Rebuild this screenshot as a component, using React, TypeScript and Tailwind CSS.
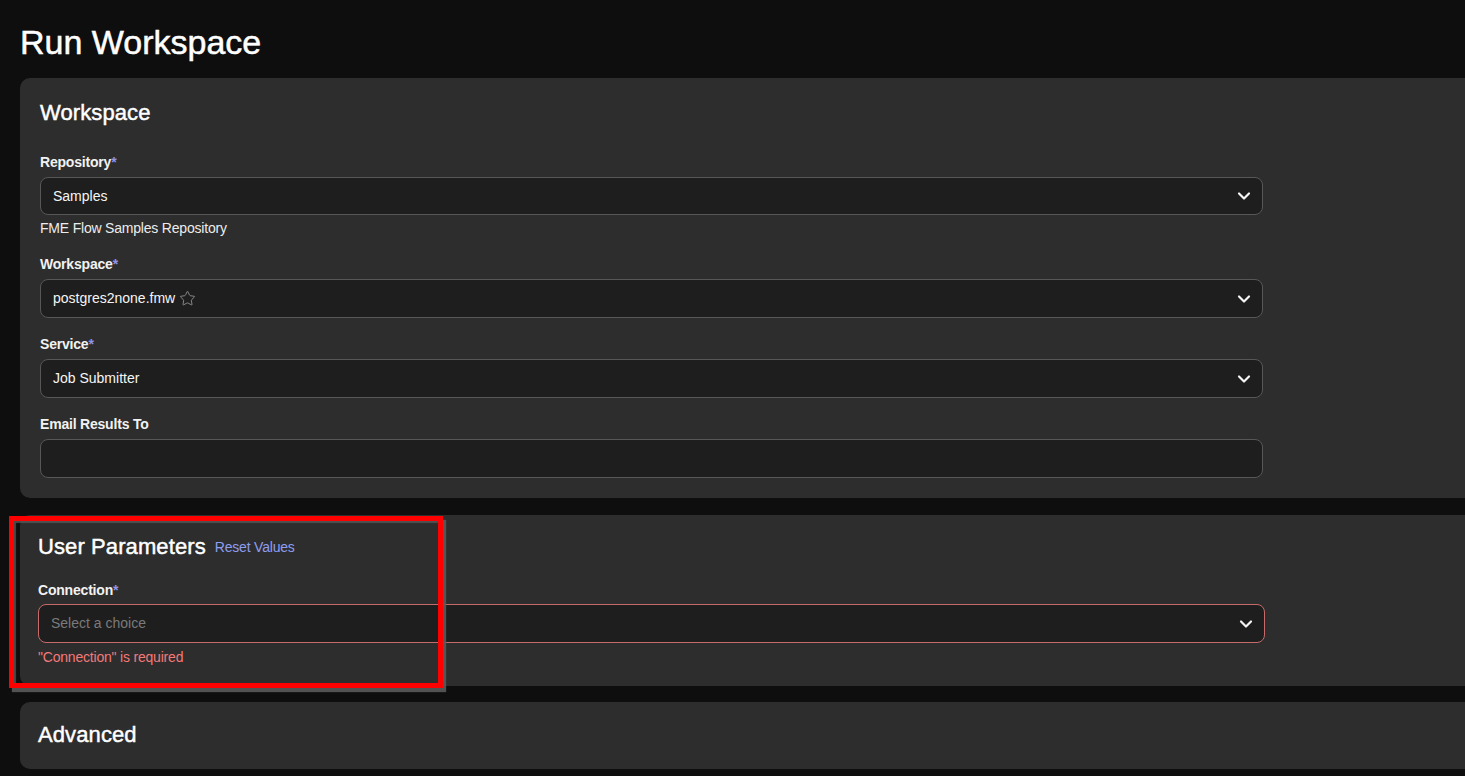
import React from "react";
import { ChevronDown, Star } from "lucide-react";

const font = { fontFamily: '"Liberation Sans", Arial, sans-serif' };

const Label = ({ text, required }: { text: string; required?: boolean }) => (
  <div className="text-[14px] leading-5 font-bold text-[#f2f2f2] tracking-[-0.2px]">
    {text}
    {required && <span className="text-[#8f94ea]">*</span>}
  </div>
);

const SelectBox = ({
  children,
  tall,
}: {
  children?: React.ReactNode;
  tall?: boolean;
}) => (
  <div
    className={`mt-[5px] w-[1223px] rounded-[8px] border border-[#575757] bg-[#1f1e1e] pl-[12px] pr-[8px] flex items-center justify-between text-[14px] ${
      tall ? "h-[39px]" : "h-[38px]"
    }`}
  >
    <div className="flex items-center gap-1 text-[#f5f5f5]">{children}</div>
    <ChevronDown size={20} strokeWidth={2.6} className="text-[#f5f5f5]" />
  </div>
);

const heading =
  "text-[22px] leading-7 text-white tracking-[0.1px] [-webkit-text-stroke:0.45px_white]";

export default function App() {
  return (
    <div
      className="min-h-[776px] w-full overflow-hidden bg-[#0e0e0e] pl-5 pt-[22px] pb-4"
      style={font}
    >
      <h1 className="text-[34px] leading-[40px] text-white [-webkit-text-stroke:0.5px_white]">
        Run Workspace
      </h1>

      <section className="mt-4 w-[1480px] rounded-[10px] bg-[#2d2d2d] px-5 pt-[21px] pb-[20px]">
        <h2 className={heading}>Workspace</h2>

        <div className="mt-[25px]">
          <Label text="Repository" required />
          <SelectBox>Samples</SelectBox>
          <div className="mt-[3px] text-[14px] leading-5 text-[#ececec] tracking-[-0.2px]">
            FME Flow Samples Repository
          </div>
        </div>

        <div className="mt-4">
          <Label text="Workspace" required />
          <SelectBox tall>
            <span>postgres2none.fmw</span>
            <Star size={17} strokeWidth={1.2} className="text-[#9a9a9a]" />
          </SelectBox>
        </div>

        <div className="mt-4">
          <Label text="Service" required />
          <SelectBox tall>Job Submitter</SelectBox>
        </div>

        <div className="mt-4">
          <Label text="Email Results To" />
          <div className="mt-[5px] h-[39px] w-[1223px] rounded-[8px] border border-[#575757] bg-[#1f1e1e]" />
        </div>
      </section>

      <section className="relative mt-[17px] w-[1480px] rounded-[10px] bg-[#2d2d2d] px-[18px] pt-[18px] pb-[19px]">
        <div className="flex items-baseline gap-[9px]">
          <h2 className={heading}>User Parameters</h2>
          <button className="text-[14px] text-[#8d9df0] tracking-[-0.2px] -translate-y-[2px]">
            Reset Values
          </button>
        </div>

        <div className="mt-[19px]">
          <Label text="Connection" required />
          <div className="mt-[4px] h-[39px] w-[1227px] rounded-[8px] border border-[#c66a6a] bg-[#1f1e1e] pl-[12px] pr-[8px] flex items-center justify-between text-[14px]">
            <span className="text-[#7a7a7a]">Select a choice</span>
            <ChevronDown size={20} strokeWidth={2.6} className="text-[#f5f5f5]" />
          </div>
          <div className="mt-[4px] text-[14px] leading-5 text-[#f27a7a] tracking-[-0.2px]">
            "Connection" is required
          </div>
        </div>

        <div className="pointer-events-none absolute left-[-11px] top-[1px] h-[172px] w-[434px] border-[5px] border-[#ff0000] shadow-[3px_4px_1px_rgba(90,90,90,0.9),inset_2px_2px_1px_rgba(90,90,90,0.8)]" />
      </section>

      <section className="mt-4 w-[1480px] rounded-[10px] bg-[#2d2d2d] px-[18px] pt-[19px] pb-[20px]">
        <h2 className={heading}>Advanced</h2>
      </section>
    </div>
  );
}
